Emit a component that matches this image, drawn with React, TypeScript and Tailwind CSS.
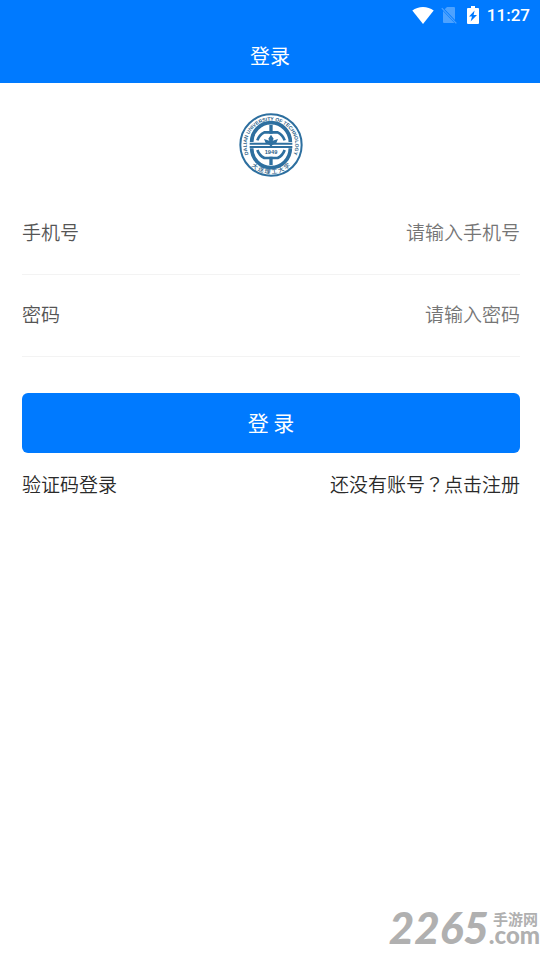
import React, { useState } from "react";

const fields = [
    { id: "phone", label: "手机号", placeholder: "请输入手机号", type: "tel" },
    { id: "password", label: "密码", placeholder: "请输入密码", type: "password" },
];

const StatusBar = () => (
    <div className="flex h-8 items-center justify-end pr-[10px] pb-0.5 text-white">
        <svg viewBox="0 0 22 17" className="h-[17px] w-[22px]" aria-hidden="true">
            <path d="M11 17 L0.3 3.6 C3.4 1.2 7 0 11 0 S18.6 1.2 21.7 3.6 Z" fill="currentColor" />
        </svg>
        <svg viewBox="0 0 16 18" className="ml-[7px] h-[18px] w-4" aria-hidden="true">
            <path d="M6 1 H13 Q14 1 14 2 V14 L3.7 3.3 Z M2 5 L13.5 17 H3 Q2 17 2 16 Z" fill="#4da2ff" />
            <path d="M0.8 2.2 L15.3 17.3" stroke="#4da2ff" strokeWidth="1.2" />
        </svg>
        <svg viewBox="0 0 12 18" className="ml-[10px] h-[18px] w-3" aria-hidden="true">
            <path
                fillRule="evenodd"
                d="M4 0 H8 V2 H11 Q12 2 12 3 V17 Q12 18 11 18 H1 Q0 18 0 17 V3 Q0 2 1 2 H4 Z M7.6 4.5 L2 10.6 H5 L3.6 15.4 L10 9 H6.6 Z"
                fill="currentColor"
            />
        </svg>
        <span className="ml-2 font-['Roboto',sans-serif] text-[17px] font-medium leading-6">11:27</span>
    </div>
);

const Logo = () => (
    <svg viewBox="0 0 192 192" className="mx-auto h-16 w-16" role="img" aria-label="Dalian University of Technology">
        <defs>
            <path id="ring-top" d="M29 125 A73 73 0 1 1 163 125" />
            <path id="ring-bottom" d="M36 158 A86 86 0 0 0 156 158" />
        </defs>
        <circle cx="96" cy="96" r="92" fill="#fff" stroke="#2d6f9f" strokeWidth="6" />
        <text fill="#2d5f88" fontSize="15" fontWeight="bold" fontFamily="Liberation Sans, sans-serif">
            <textPath href="#ring-top" startOffset="50%" textAnchor="middle">DALIAN UNIVERSITY OF TECHNOLOGY</textPath>
        </text>
        <text fill="#2d5f88" fontSize="18" fontWeight="500" fontFamily="Noto Sans CJK SC, sans-serif">
            <textPath href="#ring-bottom" startOffset="50%" textAnchor="middle">大 连 理 工 大 学</textPath>
        </text>
        <g fill="none" stroke="#2d6f9f">
            <g strokeWidth="11">
                <path d="M38 87 A58 58 0 0 1 154 87" />
                <path d="M38 106 A58 58 0 0 0 154 106" />
            </g>
            <g strokeWidth="8">
                <path d="M55 82 A42 42 0 0 1 76 58 H116 A42 42 0 0 1 137 82" />
                <path d="M55 111 A42 42 0 0 0 76 135 H116 A42 42 0 0 0 137 111" />
            </g>
            <path d="M96 36 V62 M96 131 V156" strokeWidth="10" />
            <path d="M32 92 H160 M32 102 H160" strokeWidth="6" />
        </g>
        <path
            d="M96 65 L104 77 L101 83 L117 78 L112 90 L101 95 L96 103 L91 95 L80 90 L75 78 L91 83 L88 77 Z"
            fill="#2d6f9f"
        />
        <text x="96" y="124" textAnchor="middle" fill="#2d5f88" fontSize="17" fontWeight="bold" fontFamily="Liberation Sans, sans-serif">
            1949
        </text>
    </svg>
);

const Watermark = () => (
    <div className="absolute right-0 bottom-4 flex items-end text-[#b0b0b0]">
        <span className="font-['Lato',sans-serif] text-[44px] font-black italic leading-9">2265</span>
        <div className="flex flex-col items-end">
            <span className="pr-0.5 font-['Noto_Sans_CJK_SC',sans-serif] text-[15px] font-bold leading-3">手游网</span>
            <span className="font-['Lato',sans-serif] text-2xl/5 font-black">.com</span>
        </div>
    </div>
);

const App = () => {
    const [values, setValues] = useState<Record<string, string>>({ phone: "", password: "" });

    return (
        <div className="relative min-h-screen bg-white font-['Noto_Sans_CJK_SC',sans-serif] text-[19px] font-[350]" lang="zh-CN">
            <header className="bg-[#007aff] text-white">
                <StatusBar />
                <h1 className="pt-[10px] pb-[13px] text-center text-xl leading-7 font-normal">登录</h1>
            </header>
            <main className="pt-[30px] pr-5 pl-[22px]">
                <Logo />
                <form className="mt-4" onSubmit={(e) => e.preventDefault()}>
                    {fields.map((field) => (
                        <div className="flex h-[82px] items-center border-b border-[#f3f3f3] pb-0.5" key={field.id}>
                            <label htmlFor={field.id} className="text-[#555]">
                                {field.label}
                            </label>
                            <input
                                id={field.id}
                                type={field.type}
                                value={values[field.id]}
                                placeholder={field.placeholder}
                                onChange={(e) => setValues({ ...values, [field.id]: e.target.value })}
                                className="min-w-0 flex-1 bg-transparent text-right text-[#333] outline-none placeholder:text-[#757575]"
                            />
                        </div>
                    ))}
                    <button type="submit" className="mt-9 h-[60px] w-full rounded-md bg-[#007aff] text-[21px] font-normal text-white">
                        登 录
                    </button>
                </form>
                <div className="mt-[17px] flex justify-between leading-7 text-[#2a2a2a]">
                    <a href="#code">验证码登录</a>
                    <a href="#register">
                        还没有账号<span className="font-['Noto_Sans_CJK_TC',sans-serif]" lang="zh-TW">？</span>点击注册
                    </a>
                </div>
            </main>
            <Watermark />
        </div>
    );
};

export default App;
